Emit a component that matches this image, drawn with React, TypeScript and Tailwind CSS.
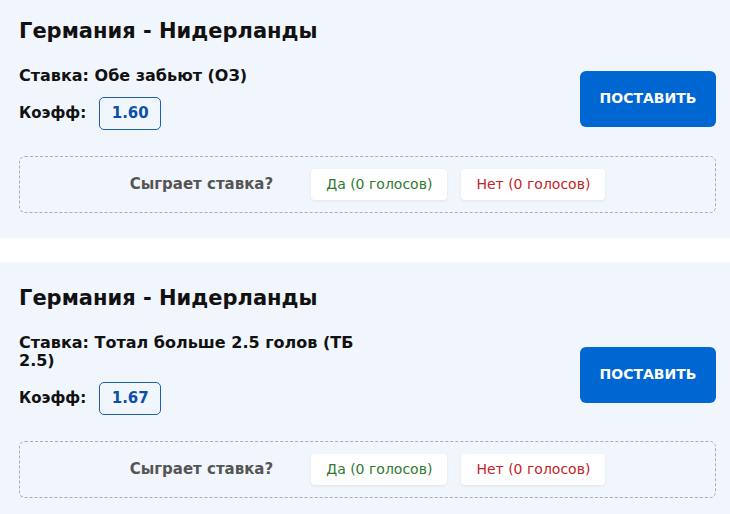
import React from 'react';

interface Bet {
  match: string;
  stake: string;
  coef: string;
}

const bets: Bet[] = [
  { match: 'Германия - Нидерланды', stake: 'Ставка: Обе забьют (ОЗ)', coef: '1.60' },
  { match: 'Германия - Нидерланды', stake: 'Ставка: Тотал больше 2.5 голов (ТБ 2.5)', coef: '1.67' },
];

const BetCard: React.FC<{ bet: Bet }> = ({ bet }) => {
  return (
    <div className="bg-[#f1f6fd] pl-[19px] pr-[14px] pt-[22px] pb-[25px] mb-[24px]">
      <h2 className="text-[21px] leading-[28px] font-bold text-[#111]">{bet.match}</h2>

      <div className="flex items-center justify-between mt-[22px]">
        <div className="w-[345px]">
          <div className="text-[16px] leading-[18px] font-bold text-[#111]">{bet.stake}</div>
          <div className="flex items-center mt-[12px]">
            <span className="text-[15px] font-bold text-[#111]">Коэфф:</span>
            <span className="ml-[13px] w-[62px] h-[33px] flex items-center justify-center border border-[#1d5fb5] rounded-[5px] text-[15px] font-bold text-[#0c4fa8]">
              {bet.coef}
            </span>
          </div>
        </div>
        <button
          type="button"
          className="w-[136px] h-[56px] bg-[#0066d2] rounded-[6px] text-white text-[14px] font-bold"
        >
          ПОСТАВИТЬ
        </button>
      </div>

      {/* vote block */}
      <div className="mt-[26px] h-[57px] border border-dashed border-[#a9adb2] rounded-[6px] flex items-center justify-center">
        <span className="text-[15px] font-bold text-[#555] mr-[38px]">Сыграет ставка?</span>
        <button
          type="button"
          className="h-[31px] px-[15px] bg-white rounded-[4px] shadow-[0_1px_3px_rgba(0,0,0,0.08)] text-[14px] text-[#2e7a30] mr-[14px]"
        >
          Да (0 голосов)
        </button>
        <button
          type="button"
          className="h-[31px] px-[15px] bg-white rounded-[4px] shadow-[0_1px_3px_rgba(0,0,0,0.08)] text-[14px] text-[#bf2429]"
        >
          Нет (0 голосов)
        </button>
      </div>
    </div>
  );
};

const App: React.FC = () => {
  return (
    <div className="w-[730px] h-[514px] overflow-hidden bg-white font-['DejaVu_Sans',sans-serif]">
      <div className="-mt-[5px]">
        {bets.map((bet, i) => (
          <BetCard key={i} bet={bet} />
        ))}
      </div>
    </div>
  );
};

export default App;
